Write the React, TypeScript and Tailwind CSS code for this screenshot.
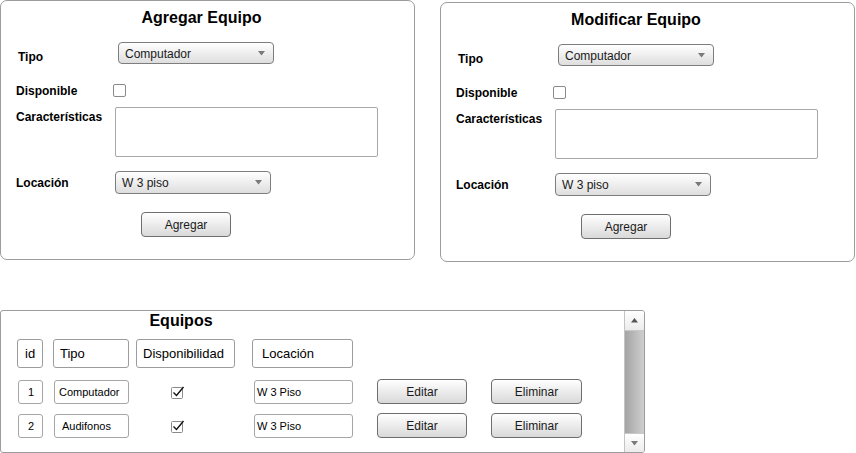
import React from "react";

const font = { fontFamily: '"Liberation Sans", Arial, sans-serif' };

function Arrow({ down = true }: { down?: boolean }) {
  return (
    <svg width="7" height="5" viewBox="0 0 7 5" className="shrink-0">
      {down ? <polygon points="0,0 7,0 3.5,4.5" fill="#7a7a7a" /> : <polygon points="0,4.5 7,4.5 3.5,0" fill="#555" />}
    </svg>
  );
}

function Select({ value, w, h, pt }: { value: string; w: string; h: string; pt: string }) {
  return (
    <div
      className={`${w} ${h} shrink-0 flex items-center justify-between pl-[6px] pr-[8px] rounded-[4px] border border-[#7d7d7d] bg-gradient-to-b from-[#ffffff] to-[#dedede] text-[12px] text-[#1a1a1a]`}
    >
      <span className={pt}>{value}</span>
      <Arrow />
    </div>
  );
}

function Button({ label, w, h }: { label: string; w: string; h: string }) {
  return (
    <div
      className={`${w} ${h} shrink-0 flex items-center justify-center rounded-[4px] border border-[#6e6e6e] bg-gradient-to-b from-[#ffffff] to-[#d9d9d9] text-[12px] text-[#1a1a1a]`}
    >
      {label}
    </div>
  );
}

function FormPanel({ title, titleW }: { title: string; titleW: string }) {
  return (
    <div className="w-[415px] h-[260px] shrink-0 border border-[#9c9c9c] rounded-[7px] bg-white">
      <div className={`mt-[7px] ${titleW} h-[20px] text-center text-[16px] leading-[20px] font-bold text-black`}>{title}</div>
      <div className="mt-[14px] flex items-start h-[22px]">
        <div className="w-[117px] pl-[17px] mt-[8px] text-[12px] leading-[14px] font-bold text-black">Tipo</div>
        <Select value="Computador" w="w-[156px]" h="h-[22px]" pt="pt-[2px]" />
      </div>
      <div className="mt-[20px] flex items-start h-[14px]">
        <div className="w-[112px] pl-[15px] text-[12px] leading-[14px] font-bold text-black">Disponible</div>
        <div className="w-[13px] h-[13px] border border-[#8a8a8a] rounded-[2px] bg-white" />
      </div>
      <div className="mt-[9px] flex items-start">
        <div className="w-[114px] pl-[15px] mt-[3px] text-[12px] leading-[14px] font-bold text-black">Características</div>
        <div className="w-[263px] h-[50px] border border-[#a8a8a8] rounded-[2px] bg-white" />
      </div>
      <div className="mt-[14px] flex items-start h-[23px]">
        <div className="w-[114px] pl-[15px] mt-[5px] text-[12px] leading-[14px] font-bold text-black">Locación</div>
        <Select value="W 3 piso" w="w-[156px]" h="h-[23px]" pt="pt-[1px]" />
      </div>
      <div className="mt-[18px] ml-[140px]">
        <Button label="Agregar" w="w-[90px]" h="h-[25px]" />
      </div>
    </div>
  );
}

function Check() {
  return (
    <svg width="14" height="13" viewBox="0 0 14 13" className="shrink-0">
      <rect x="0.5" y="1.5" width="11" height="11" rx="1" fill="white" stroke="#8a8a8a" />
      <polyline points="2.5,6.5 5.5,9.5 12.5,1" fill="none" stroke="#111" strokeWidth="1.4" />
    </svg>
  );
}

function Cell({ text, w, pl }: { text: string; w: string; pl: string }) {
  return (
    <div className={`${w} ${pl} h-[24px] shrink-0 flex items-center border border-[#a6a6a6] rounded-[3px] text-[11px] text-black bg-white`}>
      {text}
    </div>
  );
}

function Head({ text, w, pl }: { text: string; w: string; pl: string }) {
  return (
    <div className={`${w} ${pl} h-[29px] shrink-0 flex items-center border border-[#9c9c9c] rounded-[3px] text-[13px] text-black bg-white`}>
      {text}
    </div>
  );
}

function Row({ id, tipo, tipoPl }: { id: string; tipo: string; tipoPl: string }) {
  return (
    <div className="flex items-end h-[25px]">
      <div className="ml-[17px]">
        <Cell text={id} w="w-[25px]" pl="pl-[9px]" />
      </div>
      <div className="ml-[11px]">
        <Cell text={tipo} w="w-[75px]" pl={tipoPl} />
      </div>
      <div className="ml-[42px] self-start mt-[7px]">
        <Check />
      </div>
      <div className="ml-[69px]">
        <Cell text="W 3 Piso" w="w-[99px]" pl="pl-[2px]" />
      </div>
      <div className="ml-[24px]">
        <Button label="Editar" w="w-[90px]" h="h-[25px]" />
      </div>
      <div className="ml-[24px]">
        <Button label="Eliminar" w="w-[91px]" h="h-[25px]" />
      </div>
    </div>
  );
}

function TablePanel() {
  return (
    <div className="w-[645px] h-[143px] border border-[#9c9c9c] rounded-[3px] bg-white flex overflow-hidden">
      <div className="flex-1 flex flex-col">
        <div className="w-[360px] h-[20px] text-center text-[16px] leading-[20px] font-bold text-black">Equipos</div>
        <div className="mt-[8px] flex">
          <div className="ml-[16px]">
            <Head text="id" w="w-[26px]" pl="pl-[7px]" />
          </div>
          <div className="ml-[10px]">
            <Head text="Tipo" w="w-[76px]" pl="pl-[6px]" />
          </div>
          <div className="ml-[7px]">
            <Head text="Disponibilidad" w="w-[99px]" pl="pl-[6px]" />
          </div>
          <div className="ml-[17px]">
            <Head text="Locación" w="w-[101px]" pl="pl-[9px]" />
          </div>
        </div>
        <div className="mt-[11px]">
          <Row id="1" tipo="Computador" tipoPl="pl-[4px]" />
        </div>
        <div className="mt-[9px]">
          <Row id="2" tipo="Audifonos" tipoPl="pl-[7px]" />
        </div>
      </div>
      <div className="w-[20px] h-full border-l border-[#c4c4c4] flex flex-col">
        <div className="h-[20px] flex items-center justify-center bg-gradient-to-b from-[#ffffff] to-[#ececec] border-b border-[#c8c8c8]">
          <Arrow down={false} />
        </div>
        <div className="flex-1 bg-gradient-to-r from-[#a4a4a4] to-[#cfcfcf]" />
        <div className="h-[19px] flex items-center justify-center bg-gradient-to-b from-[#ffffff] to-[#ececec] border-t border-[#c8c8c8]">
          <Arrow />
        </div>
      </div>
    </div>
  );
}

export default function App() {
  return (
    <div className="w-[856px] h-[453px] bg-white overflow-hidden" style={font}>
      <div className="flex items-start gap-[25px]">
        <FormPanel title="Agregar Equipo" titleW="w-[401px]" />
        <div className="mt-[2px]">
          <FormPanel title="Modificar Equipo" titleW="w-[390px]" />
        </div>
      </div>
      <div className="mt-[48px]">
        <TablePanel />
      </div>
    </div>
  );
}
